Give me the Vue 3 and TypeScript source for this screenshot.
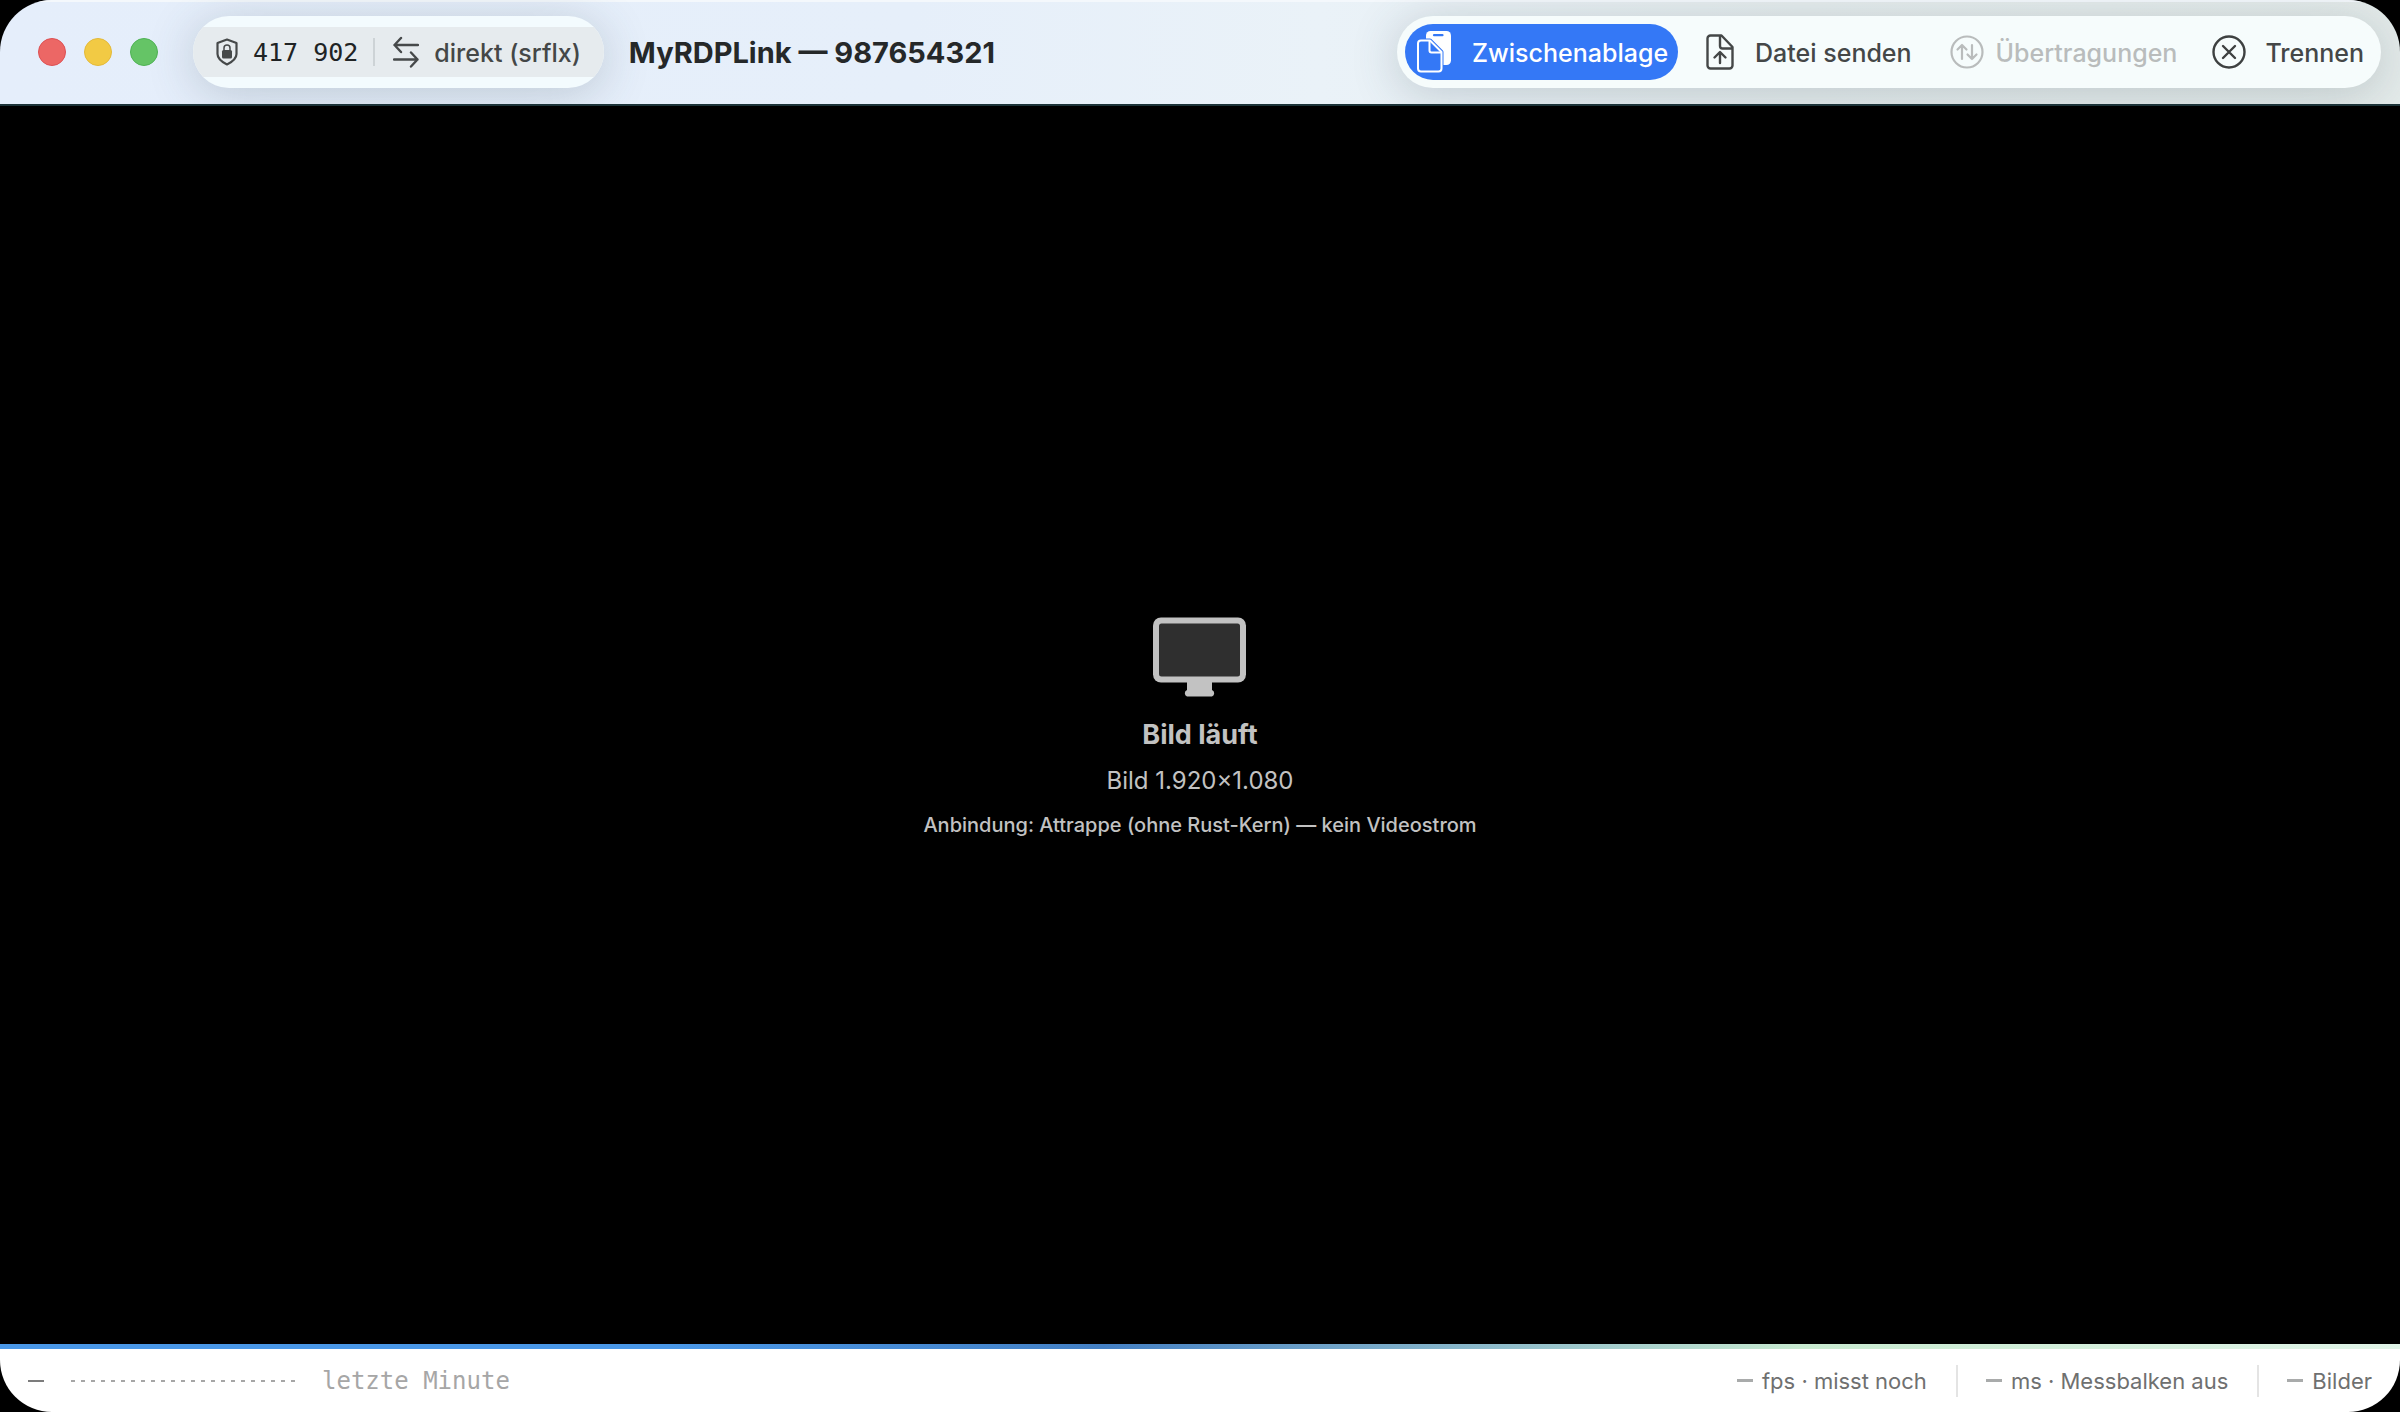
<script setup lang="ts">
interface Metric {
  text: string
}

const session = { code: '417 902', route: 'direkt (srflx)', title: 'MyRDPLink — 987654321' }
const metrics: Metric[] = [
  { text: 'fps · misst noch' },
  { text: 'ms · Messbalken aus' },
  { text: 'Bilder' },
]
</script>

<template>
  <div class="window">
    <header class="titlebar">
      <div class="lights">
        <button class="light close" aria-label="Schließen"></button>
        <button class="light minimize" aria-label="Minimieren"></button>
        <button class="light zoom" aria-label="Zoomen"></button>
      </div>
      <div class="pill status">
        <div class="status-band">
          <svg class="shield" width="22" height="28" viewBox="0 0 22 28" fill="none">
            <path d="M11 1.500 20.500 5v11c0 5-4.500 8-9.500 10.500C6 24 1.500 21 1.500 16V5z" stroke="#46494a" stroke-width="2.200" stroke-linejoin="round" />
            <rect x="6" y="12" width="10" height="8.500" rx="1.500" fill="#46494a" />
            <path d="M8 12.500V10a3 3 0 0 1 6 0v2.500" stroke="#46494a" stroke-width="1.500" />
          </svg>
          <span class="code">{{ session.code }}</span>
          <span class="divider"></span>
          <svg width="26" height="32" viewBox="0 0 26 32" fill="none" stroke="#46494a" stroke-width="2.400" stroke-linecap="round" stroke-linejoin="round">
            <path d="M25 9H1.500M8 2 1.500 9 8 16M1 23.500h23.500M18 16.500l6.500 7-6.500 7" />
          </svg>
          <span class="route">{{ session.route }}</span>
        </div>
      </div>
      <h1 class="title">{{ session.title }}</h1>
      <nav class="pill actions">
        <button class="action active">
          <svg width="34" height="42" viewBox="0 0 34 42" fill="none">
            <rect x="9" y="0" width="25" height="34" rx="4.500" fill="#fff" />
            <path d="M17 4.200h8.500" stroke="#3478f6" stroke-width="2.200" stroke-linecap="round" />
            <path d="M13 9.500H4A3 3 0 0 0 1 12.500v25a3 3 0 0 0 3 3h17.500a3 3 0 0 0 3-3V21z" stroke="#3478f6" stroke-width="4" stroke-linejoin="round" />
            <path d="M13 9.500H4A3 3 0 0 0 1 12.500v25a3 3 0 0 0 3 3h17.500a3 3 0 0 0 3-3V21z" stroke="#fff" stroke-width="2" stroke-linejoin="round" fill="#3478f6" />
            <path d="M12.500 9.500v10a2 2 0 0 0 2 2h10" stroke="#fff" stroke-width="2" />
          </svg>
          <span>Zwischenablage</span>
        </button>
        <button class="action file">
          <svg width="28" height="36" viewBox="0 0 28 36" fill="none" stroke="#444747" stroke-width="2.400" stroke-linecap="round" stroke-linejoin="round">
            <path d="M15.500 1.500H4.500a3 3 0 0 0-3 3v27a3 3 0 0 0 3 3h19a3 3 0 0 0 3-3V13zM14 1.500v10.500a2.500 2.500 0 0 0 2.500 2.500h10M14 29V18.500M8.500 23.500l5.500-5.500 5.500 5.500" />
          </svg>
          <span>Datei senden</span>
        </button>
        <button class="action transfers" disabled>
          <svg width="34" height="34" viewBox="0 0 34 34" fill="none" stroke="#b9bcbc" stroke-width="2.200" stroke-linecap="round" stroke-linejoin="round">
            <circle cx="17" cy="17" r="15.500" />
            <path d="M12 24V10M7.500 14.500 12 10l4.500 4.500M22 10v14M17.500 19.500 22 24l4.500-4.500" />
          </svg>
          <span>Übertragungen</span>
        </button>
        <button class="action disconnect">
          <svg width="34" height="34" viewBox="0 0 34 34" fill="none" stroke="#3e4141" stroke-width="2.400" stroke-linecap="round">
            <circle cx="17" cy="17" r="15.500" />
            <path d="m11 11 12 12M23 11 11 23" />
          </svg>
          <span>Trennen</span>
        </button>
      </nav>
    </header>

    <main class="stage">
      <svg class="monitor" width="94" height="80" viewBox="0 0 94 80">
        <rect x="0" y="0.500" width="93" height="65" rx="8" fill="#c2c2c2" />
        <rect x="6" y="6.500" width="81" height="53" rx="2.500" fill="#2f2f2f" />
        <path d="M34 65h25v8a3.500 3.500 0 0 1 0 6.500H34A3.500 3.500 0 0 1 34 73z" fill="#c2c2c2" />
      </svg>
      <h2>Bild läuft</h2>
      <p class="size">Bild 1.920×1.080</p>
      <p class="link">Anbindung: Attrappe (ohne Rust-Kern) — kein Videostrom</p>
    </main>

    <footer class="statusbar">
      <span class="dash dark"></span>
      <svg class="spark" width="226" height="2" viewBox="0 0 226 2">
        <line x1="0" y1="1" x2="226" y2="1" stroke="#a6a6a6" stroke-width="2" stroke-dasharray="4 6" />
      </svg>
      <span class="range">letzte Minute</span>
      <ul class="metrics">
        <li v-for="m in metrics" :key="m.text"><span class="dash"></span>{{ m.text }}</li>
      </ul>
    </footer>
  </div>
</template>

<style>
html,
body {
  background: #000;
}
</style>

<style scoped>
.window {
  display: flex;
  flex-direction: column;
  box-sizing: border-box;
  min-height: 100vh;
  overflow: hidden;
  border-radius: 52px;
  background: #000;
  color: #444747;
  font-family: Inter, "Liberation Sans", sans-serif;
  font-size: 25px;
  font-weight: 500;
  line-height: 32px;
}

.titlebar {
  display: flex;
  align-items: center;
  box-sizing: border-box;
  height: 106px;
  padding: 0 19px 0 38px;
  overflow: hidden;
  border-bottom: 2px solid #1c3338;
  background: linear-gradient(90deg, #e5eefb 0%, #e6effa 38%, #eaf2f8 55%, #e6edee 75%, #e4ebea 100%);
  box-shadow: inset 0 2px #f4f8fc;
}

.lights {
  display: flex;
  gap: 18px;
  margin-right: 35px;
}

.light {
  width: 28px;
  height: 28px;
  padding: 0;
  border: 1px solid;
  border-radius: 50%;
}

.close {
  border-color: #dd5053;
  background: #ec6765;
}

.minimize {
  border-color: #e3b93a;
  background: #f2ca44;
}

.zoom {
  border-color: #4fb254;
  background: #65c466;
}

.pill {
  display: flex;
  align-items: center;
  box-sizing: border-box;
  height: 72px;
  border-radius: 36px;
  background: #f6fcfc;
  box-shadow: 0 6px 48px rgba(60, 80, 90, 0.24);
}

.status {
  overflow: hidden;
  background: #f3fbfe;
}

.status-band {
  display: flex;
  align-items: center;
  height: 50px;
  padding: 0 23px;
  background: #e6ebee;
}

.code {
  margin-left: 15px;
  color: #202324;
  font-family: "DejaVu Sans Mono", "Liberation Mono", monospace;
  font-size: 25px;
  font-weight: 400;
}

.divider {
  width: 2px;
  height: 28px;
  margin: 0 18px 0 15px;
  background: #cdd3d6;
}

.route {
  margin-left: 15px;
}

.code,
.route,
.title,
.action span {
  padding-top: 2px;
}

.title {
  margin: 0 0 0 25px;
  color: #252829;
  font-size: 29px;
  font-weight: 700;
}

.actions {
  margin-left: auto;
  padding: 0 17px 0 8px;
}

.action {
  display: flex;
  align-items: center;
  height: 56px;
  padding: 0;
  border: 0;
  background: none;
  color: #444747;
  font: inherit;
}

.action.active {
  gap: 21px;
  padding: 0 10px 0 12px;
  border-radius: 28px;
  background: #3478f6;
  color: #fff;
}

.file {
  gap: 21px;
  margin-left: 28px;
}

.action.transfers {
  gap: 12px;
  margin-left: 38px;
  color: #b9bcbc;
}

.disconnect {
  gap: 19px;
  margin-left: 35px;
}

.stage {
  display: flex;
  flex: 1;
  flex-direction: column;
  align-items: center;
  justify-content: center;
  padding-top: 8px;
  color: #c2c2c2;
}

.stage h2 {
  margin: 22px 0 0;
  font-size: 27px;
  font-weight: 700;
}

.size {
  margin: 14px 0 0;
  font-size: 24px;
  font-weight: 400;
}

.link {
  margin: 12px 0 0;
  font-size: 20px;
}

.statusbar {
  display: flex;
  align-items: center;
  box-sizing: border-box;
  height: 68px;
  padding: 0 28px;
  border-top: 5px solid;
  border-image: linear-gradient(90deg, #4a98e8 28%, #4480c4 46%, #c8ead0 75%, #e0f4e8 100%) 5;
  background: #fff;
  color: #6f7070;
  font-size: 22px;
  font-weight: 400;
}

.dash {
  width: 16px;
  height: 3px;
  margin-right: 9px;
  background: #a9abab;
}

.dash.dark {
  height: 2px;
  margin-right: 27px;
  background: #7c7c7c;
}

.range {
  margin-left: 25px;
  color: #a6a6a6;
  font-family: "DejaVu Sans Mono", "Liberation Mono", monospace;
  font-size: 24px;
}

.metrics {
  display: flex;
  margin: 0 0 0 auto;
  padding: 0;
  list-style: none;
}

.metrics li {
  display: flex;
  align-items: center;
}

.metrics li + li {
  margin-left: 29px;
  padding-left: 28px;
  border-left: 2px solid #e4e4e4;
}
</style>
